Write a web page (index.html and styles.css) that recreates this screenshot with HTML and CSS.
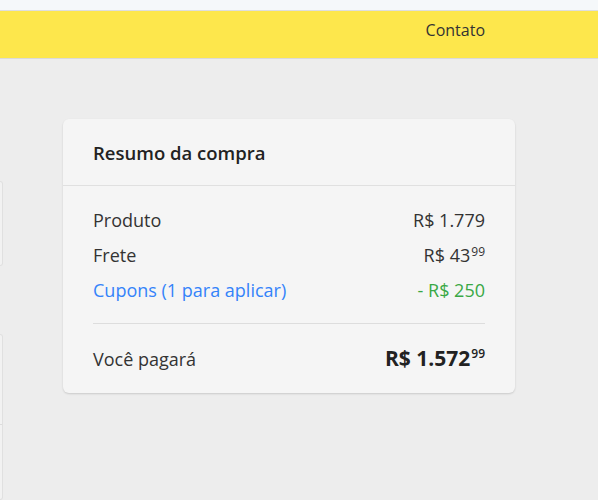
FILE: index.html
```html
<!DOCTYPE HTML>
<html lang="pt-BR">
  <head>
    <meta charset="utf-8">
    <title>Resumo da compra</title>
    <link rel="stylesheet" href="styles.css">
  </head>
  <body>
    <div class="topbar"></div>
    <header class="header">
      <nav class="nav">
        <a href="#" class="nav-link">Contato</a>
      </nav>
    </header>
    <div class="page">
      <aside class="side">
        <div class="side-card side-card-top"></div>
        <div class="side-card side-card-bottom">
          <div class="side-row"></div>
        </div>
      </aside>
      <main class="main">
        <section class="summary">
          <h2 class="summary-title">Resumo da compra</h2>
          <div class="summary-body">
            <div class="row">
              <span>Produto</span>
              <span class="price">R$ 1.779</span>
            </div> <!-- .row -->
            <div class="row">
              <span>Frete</span>
              <span class="price">R$ 43<sup>99</sup></span>
            </div> <!-- .row -->
            <div class="row row-coupon">
              <a href="#" class="coupon-link">Cupons (1 para aplicar)</a>
              <span class="price discount">- R$ 250</span>
            </div> <!-- .row -->
            <div class="row row-total">
              <span>Você pagará</span>
              <span class="price total">R$ 1.572<sup>99</sup></span>
            </div> <!-- .row -->
          </div> <!-- .summary-body -->
        </section> <!-- .summary -->
      </main>
    </div> <!-- .page -->
  </body>
</html>
```

FILE: styles.css
```css
* {
  margin: 0;
  padding: 0;
  box-sizing: border-box; }

html {
  font-family: "Open Sans", Arial, sans-serif; }

body {
  background: #ededed;
  color: #333;
  font-size: 18px;
  height: 500px;
  overflow: hidden; }

a {
  text-decoration: none; }

.topbar {
  height: 11px;
  background: #f5f8fa;
  border-bottom: 1px solid #dedede; }

.header {
  height: 48px;
  background: #fde74c;
  border-bottom: 1px solid #dadada; }

.nav {
  display: flex;
  justify-content: flex-end;
  padding: 8px 113px 0 0; }

.nav-link {
  color: #333;
  font-size: 16px; }

.page {
  display: flex; }

.side {
  width: 3px;
  padding-top: 122px; }

.side-card {
  background: #f2f2f2;
  border: 1px solid #e0e0e0;
  border-left: none;
  border-radius: 0 4px 4px 0; }

.side-card-top {
  height: 85px;
  margin-bottom: 68px; }

.side-card-bottom {
  height: 166px;
  padding-top: 89px; }

.side-row {
  border-top: 1px solid #dcdcdc; }

.main {
  padding: 60px 0 0 60px; }

.summary {
  width: 452px;
  background: #f5f5f5;
  border-radius: 6px;
  box-shadow: 0 1px 2px rgba(0, 0, 0, 0.15); }

.summary-title {
  font-size: 18.5px;
  font-weight: 600;
  line-height: 24px;
  color: #222;
  padding: 22px 30px 20px;
  border-bottom: 1px solid #e0e0e0; }

.summary-body {
  padding: 17px 30px 16px; }

.row {
  display: flex;
  justify-content: space-between;
  align-items: baseline;
  line-height: 35px; }

.coupon-link {
  color: #3483fa; }

.discount {
  color: #39a845; }

.row-total {
  border-top: 1px solid #ddd;
  margin-top: 15px;
  padding-top: 16px;
  line-height: 36px; }

.price sup {
  font-size: 12px;
  vertical-align: 6px;
  line-height: 0;
  margin-left: 1px; }

.total {
  font-size: 21px;
  font-weight: 700;
  color: #222; }

.total sup {
  font-weight: 600;
  font-size: 12px;
  vertical-align: 8px; }
```
